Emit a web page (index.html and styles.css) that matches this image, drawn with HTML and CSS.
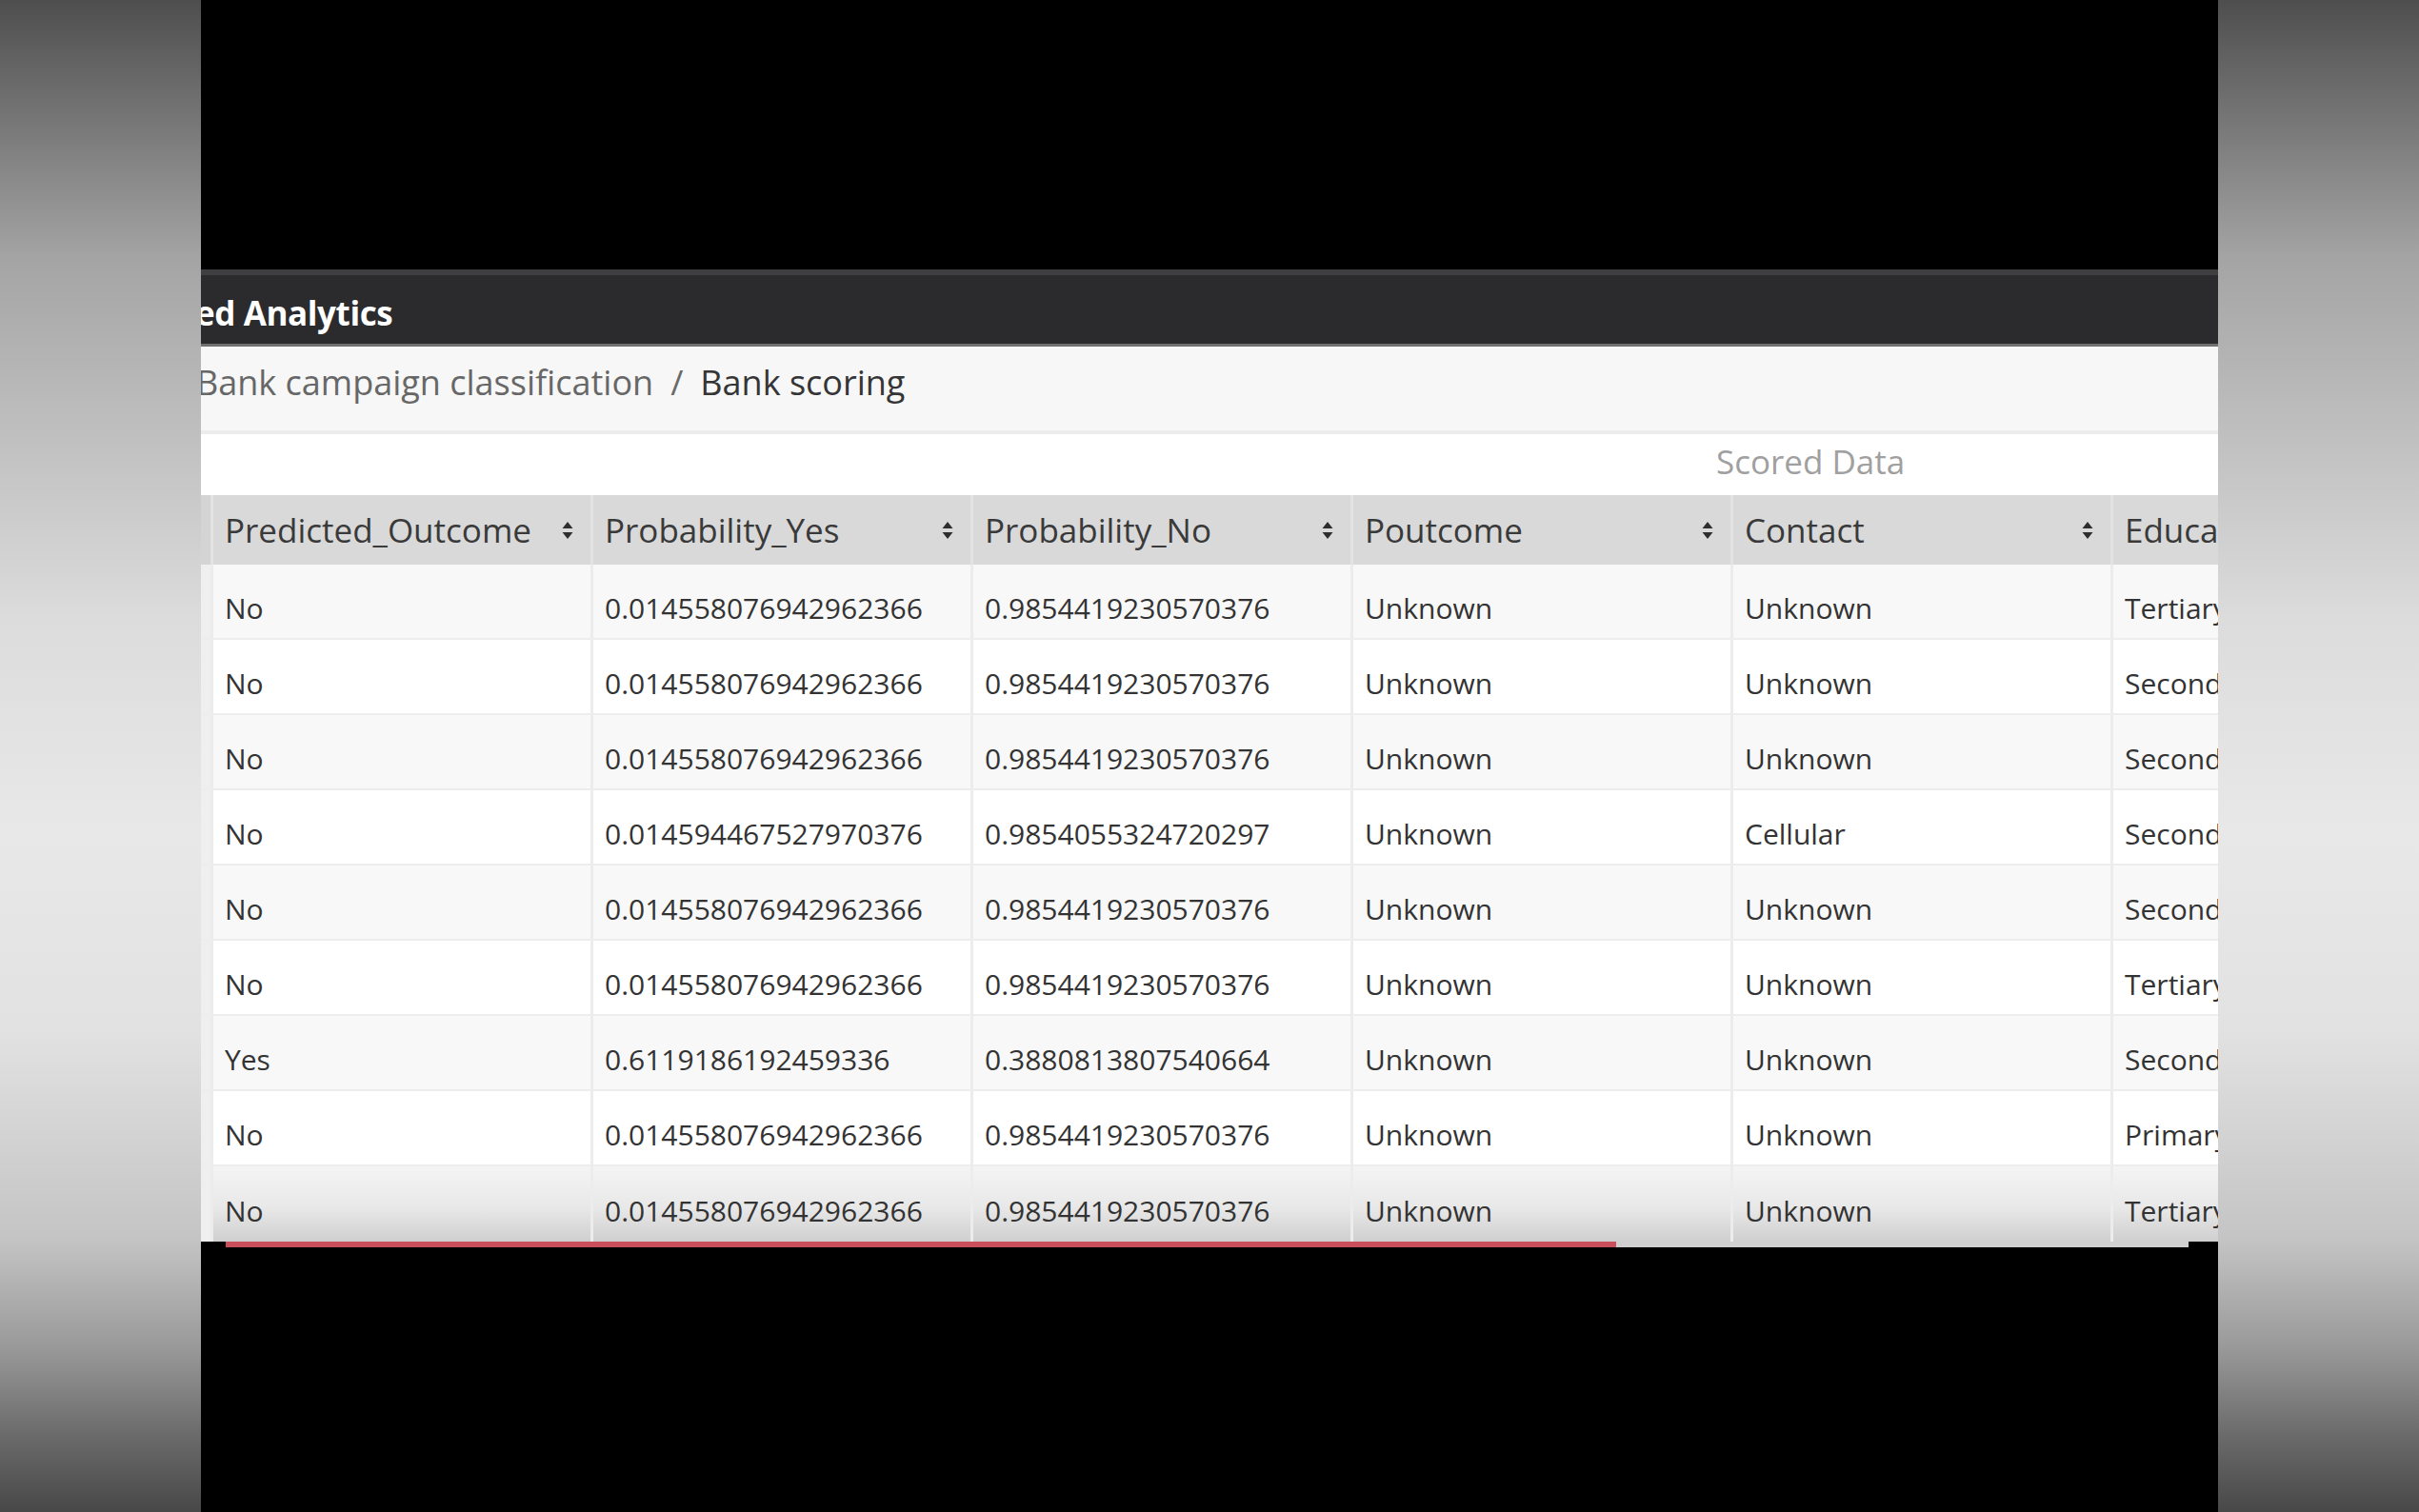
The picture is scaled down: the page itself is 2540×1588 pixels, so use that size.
FILE: index.html
```html
<!DOCTYPE html>
<html lang="en">
<head>
<meta charset="utf-8">
<title>Bank scoring</title>
<link rel="stylesheet" href="styles.css">
</head>
<body>
<div class="stage">
  <div class="side"></div>
  <div class="screen">
    <div class="letterbox"></div>
    <header class="topbar"><span class="brand">ed Analytics</span></header>
    <nav class="crumbs">
      <span class="crumb">Bank campaign classification</span>
      <span class="sep">/</span>
      <span class="crumb current">Bank scoring</span>
    </nav>
    <div class="caption">Scored Data</div>
    <div class="table">
      <div class="row head">
        <div class="cell stub"></div>
        <div class="cell"><span>Predicted_Outcome</span><svg class="sort" viewBox="0 0 12 20" width="12" height="20"><path d="M6 1 L11.5 8 H0.5 Z M6 19 L11.5 12 H0.5 Z"/></svg></div>
        <div class="cell"><span>Probability_Yes</span><svg class="sort" viewBox="0 0 12 20" width="12" height="20"><path d="M6 1 L11.5 8 H0.5 Z M6 19 L11.5 12 H0.5 Z"/></svg></div>
        <div class="cell"><span>Probability_No</span><svg class="sort" viewBox="0 0 12 20" width="12" height="20"><path d="M6 1 L11.5 8 H0.5 Z M6 19 L11.5 12 H0.5 Z"/></svg></div>
        <div class="cell"><span>Poutcome</span><svg class="sort" viewBox="0 0 12 20" width="12" height="20"><path d="M6 1 L11.5 8 H0.5 Z M6 19 L11.5 12 H0.5 Z"/></svg></div>
        <div class="cell"><span>Contact</span><svg class="sort" viewBox="0 0 12 20" width="12" height="20"><path d="M6 1 L11.5 8 H0.5 Z M6 19 L11.5 12 H0.5 Z"/></svg></div>
        <div class="cell"><span>Education</span><svg class="sort" viewBox="0 0 12 20" width="12" height="20"><path d="M6 1 L11.5 8 H0.5 Z M6 19 L11.5 12 H0.5 Z"/></svg></div>
      </div>
      <div class="row odd">
        <div class="cell stub"></div><div class="cell">No</div><div class="cell">0.014558076942962366</div><div class="cell">0.9854419230570376</div><div class="cell">Unknown</div><div class="cell">Unknown</div><div class="cell">Tertiary</div>
      </div>
      <div class="row">
        <div class="cell stub"></div><div class="cell">No</div><div class="cell">0.014558076942962366</div><div class="cell">0.9854419230570376</div><div class="cell">Unknown</div><div class="cell">Unknown</div><div class="cell">Secondary</div>
      </div>
      <div class="row odd">
        <div class="cell stub"></div><div class="cell">No</div><div class="cell">0.014558076942962366</div><div class="cell">0.9854419230570376</div><div class="cell">Unknown</div><div class="cell">Unknown</div><div class="cell">Secondary</div>
      </div>
      <div class="row">
        <div class="cell stub"></div><div class="cell">No</div><div class="cell">0.014594467527970376</div><div class="cell">0.9854055324720297</div><div class="cell">Unknown</div><div class="cell">Cellular</div><div class="cell">Secondary</div>
      </div>
      <div class="row odd">
        <div class="cell stub"></div><div class="cell">No</div><div class="cell">0.014558076942962366</div><div class="cell">0.9854419230570376</div><div class="cell">Unknown</div><div class="cell">Unknown</div><div class="cell">Secondary</div>
      </div>
      <div class="row">
        <div class="cell stub"></div><div class="cell">No</div><div class="cell">0.014558076942962366</div><div class="cell">0.9854419230570376</div><div class="cell">Unknown</div><div class="cell">Unknown</div><div class="cell">Tertiary</div>
      </div>
      <div class="row odd">
        <div class="cell stub"></div><div class="cell">Yes</div><div class="cell">0.6119186192459336</div><div class="cell">0.3880813807540664</div><div class="cell">Unknown</div><div class="cell">Unknown</div><div class="cell">Secondary</div>
      </div>
      <div class="row">
        <div class="cell stub"></div><div class="cell">No</div><div class="cell">0.014558076942962366</div><div class="cell">0.9854419230570376</div><div class="cell">Unknown</div><div class="cell">Unknown</div><div class="cell">Primary</div>
      </div>
      <div class="row last">
        <div class="cell stub"></div><div class="cell">No</div><div class="cell">0.014558076942962366</div><div class="cell">0.9854419230570376</div><div class="cell">Unknown</div><div class="cell">Unknown</div><div class="cell">Tertiary</div>
      </div>
    </div>
    <div class="scrollbar"><div class="thumb"></div><div class="track"></div></div>
  </div>
  <div class="side"></div>
</div>
</body>
</html>
```

FILE: styles.css
```css
* { box-sizing: border-box; }
html, body { margin: 0; padding: 0; }
body {
  background: #000;
  font-family: "Open Sans", "Noto Sans", "Liberation Sans", sans-serif;
}
.stage {
  display: flex;
  width: 2540px;
  height: 1588px;
  overflow: hidden;
}
.side {
  flex: none;
  width: 211px;
  height: 100%;
  background: linear-gradient(to bottom,
    #4e4e4e 0%, #a4a4a4 17%, #dcdcdc 41%, #e8e8e8 55%, #e2e2e2 68%,
    #c4c4c4 82%, #9a9a9a 89%, #6a6a6a 95%, #484848 100%);
}
.screen {
  flex: none;
  width: 2118px;
  height: 100%;
  background: #000;
  overflow: hidden;
  display: flex;
  flex-direction: column;
}
.letterbox { flex: none; height: 283px; }

.topbar {
  flex: none;
  height: 81px;
  background: #2b2b2d;
  border-top: 6px solid #3f3f41;
  border-bottom: 3px solid #707070;
  display: flex;
  align-items: center;
  padding-top: 6px;
  white-space: nowrap;
}
.brand {
  margin-left: -6px;
  color: #fff;
  font-weight: 700;
  font-size: 35px;
  letter-spacing: -0.4px;
}

.crumbs {
  flex: none;
  height: 92px;
  background: #f7f7f7;
  border-bottom: 4px solid #ececec;
  display: flex;
  align-items: center;
  padding-bottom: 14px;
  font-size: 36px;
  color: #676767;
  white-space: nowrap;
}
.crumb:first-child { margin-left: -5px; }
.sep { margin: 0 18px; color: #6a6a6a; }
.current { color: #353535; }

.caption {
  flex: none;
  height: 64px;
  background: #fff;
  display: flex;
  align-items: center;
  padding-left: 1591px;
  padding-bottom: 7px;
  font-size: 35px;
  color: #a0a0a0;
  white-space: nowrap;
}

.table { flex: none; }
.row {
  display: grid;
  grid-template-columns: 13px repeat(6, 399px);
  height: 79px;
  background: #fff;
  border-bottom: 2px solid #ededed;
}
.row.odd { background: #f8f8f8; }
.row.last {
  border-bottom: none;
  background: linear-gradient(to bottom, #f4f4f4 0%, #e8e8e8 55%, #cfcfcf 100%);
}
.cell {
  display: flex;
  align-items: center;
  padding: 14px 12px 0;
  border-right: 3px solid #ececec;
  font-size: 30px;
  color: #333;
  white-space: nowrap;
  overflow: hidden;
}
.cell.stub { padding: 0; background: #efefef; }

.row.head {
  height: 73px;
  background: #d9d9d9;
  border-bottom: none;
}
.head .cell {
  justify-content: space-between;
  padding: 0 18px 0 12px;
  border-right-color: #e3e3e3;
  font-size: 35px;
  color: #3a3a3a;
}
.head .cell.stub { background: #d4d4d4; padding: 0; }
.sort { flex: none; fill: #2e2e2e; }

.scrollbar {
  flex: none;
  height: 6px;
  display: flex;
}
.thumb { margin-left: 26px; width: 1460px; background: #c9505b; }
.track { width: 601px; background: #cfcfcf; }
```
